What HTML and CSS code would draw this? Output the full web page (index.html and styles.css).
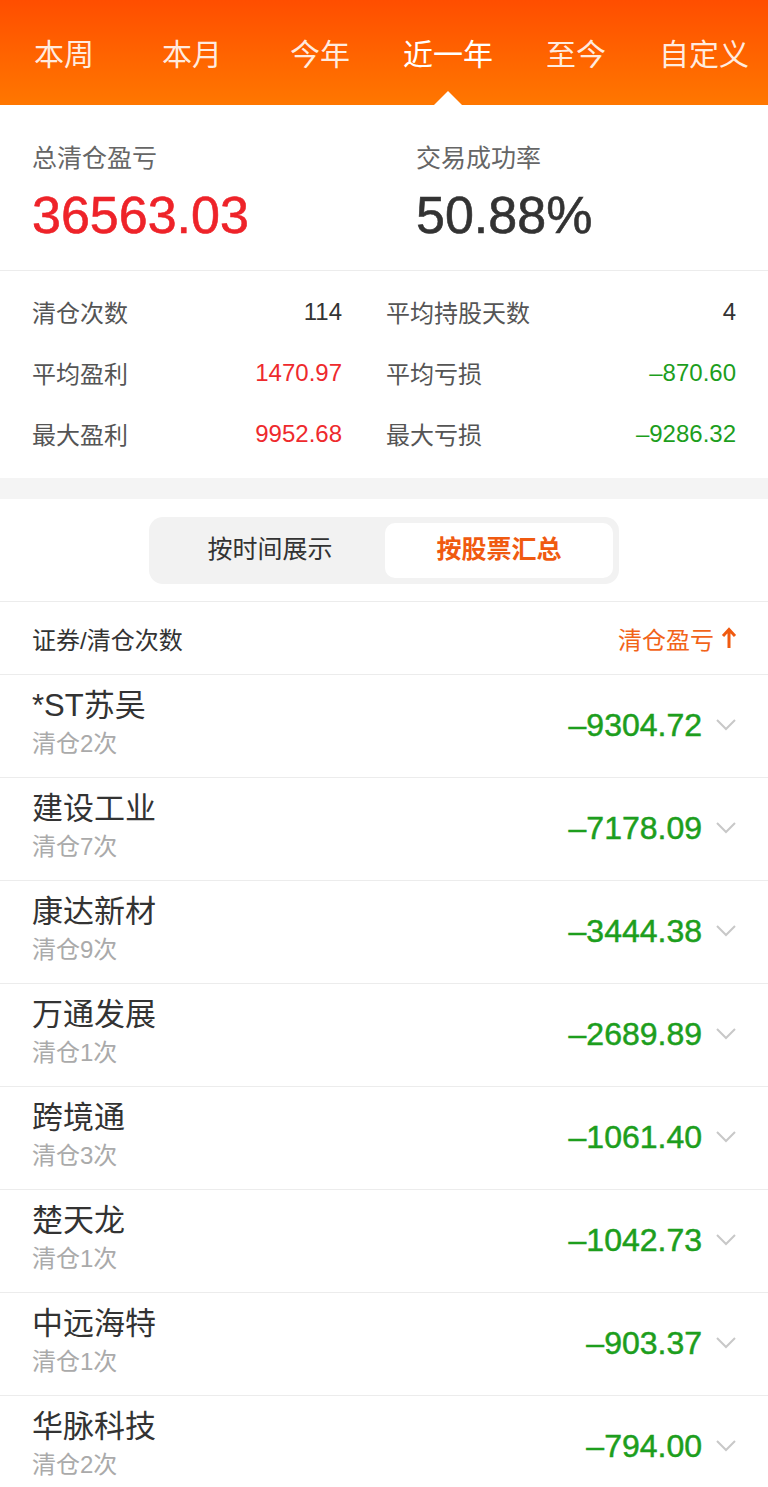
FILE: index.html
```html
<!DOCTYPE html>
<html>
<head>
    <meta name="viewport" content="width=device-width, initial-scale=1.0">
    <link rel="stylesheet" href="styles.css">
    <title>清仓盈亏</title>
</head>
<body>
    <div class="tabs">
        <span class="tab">本周</span>
        <span class="tab">本月</span>
        <span class="tab">今年</span>
        <span class="tab active">近一年</span>
        <span class="tab">至今</span>
        <span class="tab">自定义</span>
    </div>

    <div class="summary">
        <div class="sum-item">
            <div class="sum-label">总清仓盈亏</div>
            <div class="sum-value red">36563.03</div>
        </div>
        <div class="sum-item">
            <div class="sum-label">交易成功率</div>
            <div class="sum-value">50.88%</div>
        </div>
    </div>

    <div class="stats">
        <div class="stat"><span class="stat-label">清仓次数</span><span class="stat-value">114</span></div>
        <div class="stat"><span class="stat-label">平均持股天数</span><span class="stat-value">4</span></div>
        <div class="stat"><span class="stat-label">平均盈利</span><span class="stat-value red">1470.97</span></div>
        <div class="stat"><span class="stat-label">平均亏损</span><span class="stat-value green">–870.60</span></div>
        <div class="stat"><span class="stat-label">最大盈利</span><span class="stat-value red">9952.68</span></div>
        <div class="stat"><span class="stat-label">最大亏损</span><span class="stat-value green">–9286.32</span></div>
    </div>

    <div class="gap"></div>

    <div class="switch-wrap">
        <div class="switch">
            <span class="switch-btn">按时间展示</span>
            <span class="switch-btn on">按股票汇总</span>
        </div>
    </div>

    <div class="list-head">
        <span>证券/清仓次数</span>
        <span class="sort">清仓盈亏<svg class="arrow" width="16" height="22" viewBox="0 0 16 22"><path d="M8 21 V3 M2 9 L8 2.5 L14 9" fill="none" stroke="#f05a10" stroke-width="3"/></svg></span>
    </div>

    <div class="list">
        <div class="row">
            <div><div class="name">*ST苏吴</div><div class="sub">清仓2次</div></div>
            <div class="row-right"><span class="amount">–9304.72</span><svg class="chev" width="20" height="12" viewBox="0 0 20 12"><path d="M1 1 L10 10 L19 1" fill="none" stroke="#c8c8c8" stroke-width="2"/></svg></div>
        </div>
        <div class="row">
            <div><div class="name">建设工业</div><div class="sub">清仓7次</div></div>
            <div class="row-right"><span class="amount">–7178.09</span><svg class="chev" width="20" height="12" viewBox="0 0 20 12"><path d="M1 1 L10 10 L19 1" fill="none" stroke="#c8c8c8" stroke-width="2"/></svg></div>
        </div>
        <div class="row">
            <div><div class="name">康达新材</div><div class="sub">清仓9次</div></div>
            <div class="row-right"><span class="amount">–3444.38</span><svg class="chev" width="20" height="12" viewBox="0 0 20 12"><path d="M1 1 L10 10 L19 1" fill="none" stroke="#c8c8c8" stroke-width="2"/></svg></div>
        </div>
        <div class="row">
            <div><div class="name">万通发展</div><div class="sub">清仓1次</div></div>
            <div class="row-right"><span class="amount">–2689.89</span><svg class="chev" width="20" height="12" viewBox="0 0 20 12"><path d="M1 1 L10 10 L19 1" fill="none" stroke="#c8c8c8" stroke-width="2"/></svg></div>
        </div>
        <div class="row">
            <div><div class="name">跨境通</div><div class="sub">清仓3次</div></div>
            <div class="row-right"><span class="amount">–1061.40</span><svg class="chev" width="20" height="12" viewBox="0 0 20 12"><path d="M1 1 L10 10 L19 1" fill="none" stroke="#c8c8c8" stroke-width="2"/></svg></div>
        </div>
        <div class="row">
            <div><div class="name">楚天龙</div><div class="sub">清仓1次</div></div>
            <div class="row-right"><span class="amount">–1042.73</span><svg class="chev" width="20" height="12" viewBox="0 0 20 12"><path d="M1 1 L10 10 L19 1" fill="none" stroke="#c8c8c8" stroke-width="2"/></svg></div>
        </div>
        <div class="row">
            <div><div class="name">中远海特</div><div class="sub">清仓1次</div></div>
            <div class="row-right"><span class="amount">–903.37</span><svg class="chev" width="20" height="12" viewBox="0 0 20 12"><path d="M1 1 L10 10 L19 1" fill="none" stroke="#c8c8c8" stroke-width="2"/></svg></div>
        </div>
        <div class="row">
            <div><div class="name">华脉科技</div><div class="sub">清仓2次</div></div>
            <div class="row-right"><span class="amount">–794.00</span><svg class="chev" width="20" height="12" viewBox="0 0 20 12"><path d="M1 1 L10 10 L19 1" fill="none" stroke="#c8c8c8" stroke-width="2"/></svg></div>
        </div>
    </div>
</body>
</html>
```

FILE: styles.css
```css
body {
    margin: 0;
    font-family: "Liberation Sans", "Noto Sans CJK SC", sans-serif;
    background-color: #fff;
    color: #333;
}

/* top tabs */
.tabs {
    display: grid;
    grid-template-columns: repeat(6, 1fr);
    height: 105px;
    background: linear-gradient(#ff4e00, #ff7700);
}

.tab {
    position: relative;
    display: flex;
    align-items: center;
    justify-content: center;
    padding-bottom: 2px;
    font-size: 30px;
    color: rgba(255, 255, 255, 0.88);
}

.tab.active {
    color: #fff;
}

.tab.active::after {
    content: "";
    position: absolute;
    left: 50%;
    bottom: 0;
    margin-left: -14px;
    border-left: 14px solid transparent;
    border-right: 14px solid transparent;
    border-bottom: 14px solid #fff;
}

/* summary */
.summary {
    display: grid;
    grid-template-columns: 384px 1fr;
    padding: 36px 32px 0;
    height: 129px;
    border-bottom: 1px solid #ececec;
}

.sum-label {
    font-size: 25px;
    line-height: 34px;
    color: #666;
}

.sum-value {
    font-size: 52px;
    line-height: 60px;
    margin-top: 10px;
    color: #333;
    -webkit-text-stroke: 0.6px #333;
}

.sum-value.red {
    color: #ee2329;
    -webkit-text-stroke: 0.6px #ee2329;
}

/* stats */
.stats {
    display: grid;
    grid-template-columns: 310px 350px;
    column-gap: 44px;
    padding: 10px 0 14px 32px;
}

.stat {
    display: flex;
    justify-content: space-between;
    align-items: center;
    height: 61px;
    font-size: 24px;
}

.stat-label {
    color: #555;
}

.stat-value {
    color: #333;
}

.stat-value.red {
    color: #ee2a2d;
}

.stat-value.green {
    color: #1d9e1d;
}

.gap {
    height: 21px;
    background-color: #f4f4f4;
}

/* switch */
.switch-wrap {
    display: flex;
    justify-content: center;
    padding: 18px 0 17px;
    border-bottom: 1px solid #ececec;
}

.switch {
    display: grid;
    grid-template-columns: 230px 228px;
    width: 470px;
    box-sizing: border-box;
    padding: 6px;
    background-color: #f2f2f2;
    border-radius: 14px;
}

.switch-btn {
    height: 55px;
    line-height: 53px;
    text-align: center;
    font-size: 25px;
    color: #333;
    border-radius: 10px;
}

.switch-btn.on {
    background-color: #fff;
    color: #f05a10;
    font-weight: bold;
}

/* list */
.list-head {
    display: flex;
    justify-content: space-between;
    align-items: center;
    height: 72px;
    padding: 0 31px 0 32px;
    font-size: 24px;
    color: #333;
    border-bottom: 1px solid #ececec;
}

.sort {
    display: flex;
    align-items: center;
    color: #f2641a;
}

.arrow {
    margin-left: 7px;
}

.row {
    display: flex;
    justify-content: space-between;
    align-items: center;
    height: 102px;
    padding: 0 32px;
    border-bottom: 1px solid #ececec;
}

.name {
    font-size: 31px;
    line-height: 36px;
    color: #333;
    margin-top: -6px;
}

.sub {
    font-size: 24px;
    line-height: 28px;
    margin-top: 6px;
    color: #aaa;
}

.row-right {
    display: flex;
    align-items: center;
    margin-top: -2px;
}

.amount {
    font-size: 32px;
    color: #1d9e1d;
    -webkit-text-stroke: 0.5px #1d9e1d;
}

.chev {
    margin-left: 14px;
}
```
